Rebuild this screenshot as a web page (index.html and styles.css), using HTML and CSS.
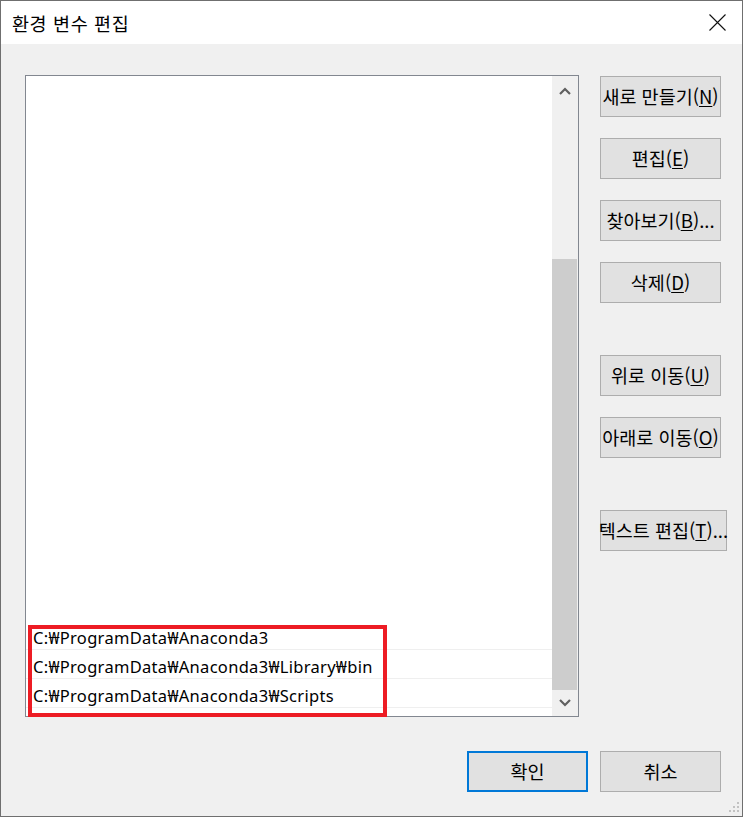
FILE: index.html
```html
<!DOCTYPE html>
<html lang="ko">
<head>
<meta charset="utf-8">
<title>환경 변수 편집</title>
<link rel="stylesheet" href="styles.css">
</head>
<body>
<div class="window">
  <div class="titlebar">
    <span class="title">환경 변수 편집</span>
    <svg class="close" width="17" height="17" viewBox="0 0 17 17"><path d="M0.5 0.5 L16.5 16.5 M16.5 0.5 L0.5 16.5" stroke="#111" stroke-width="1.1" fill="none"/></svg>
  </div>
  <div class="client">
    <div class="main">
      <div class="listbox">
        <div class="list">
          <div class="row">C:₩ProgramData₩Anaconda3</div>
          <div class="row">C:₩ProgramData₩Anaconda3₩Library₩bin</div>
          <div class="row">C:₩ProgramData₩Anaconda3₩Scripts</div>
        </div>
        <div class="scrollbar">
          <div class="sb-btn sb-up"><svg width="12" height="8" viewBox="0 0 12 8"><polyline points="1,7 6,2 11,7" fill="none" stroke="#606060" stroke-width="2.2"/></svg></div>
          <div class="sb-track"><div class="sb-thumb"></div></div>
          <div class="sb-btn sb-down"><svg width="12" height="8" viewBox="0 0 12 8"><polyline points="1,1 6,6 11,1" fill="none" stroke="#606060" stroke-width="2.2"/></svg></div>
        </div>
        <div class="highlight"></div>
      </div>
      <div class="side">
        <div class="btn">새로 만들기(<u>N</u>)</div>
        <div class="btn gap">편집(<u>E</u>)</div>
        <div class="btn gap">찾아보기(<u>B</u>)...</div>
        <div class="btn gap">삭제(<u>D</u>)</div>
        <div class="btn gap-lg">위로 이동(<u>U</u>)</div>
        <div class="btn gap">아래로 이동(<u>O</u>)</div>
        <div class="btn gap-lg wide">텍스트 편집(<u>T</u>)...</div>
      </div>
    </div>
    <div class="footer">
      <div class="btn default">확인</div>
      <div class="btn">취소</div>
    </div>
    <svg class="grip" width="10" height="10" viewBox="0 0 10 10">
      <rect x="8" y="0" width="2" height="2" fill="#c2c2c2"/>
      <rect x="4" y="4" width="2" height="2" fill="#c2c2c2"/>
      <rect x="8" y="4" width="2" height="2" fill="#c2c2c2"/>
      <rect x="0" y="8" width="2" height="2" fill="#c2c2c2"/>
      <rect x="4" y="8" width="2" height="2" fill="#c2c2c2"/>
      <rect x="8" y="8" width="2" height="2" fill="#c2c2c2"/>
    </svg>
  </div>
</div>
</body>
</html>
```
FILE: styles.css
```css
html, body {
  margin: 0;
  padding: 0;
}
body {
  width: 743px;
  height: 817px;
  font-family: "Noto Sans CJK KR", sans-serif;
  color: #000;
}
.window {
  box-sizing: border-box;
  width: 743px;
  height: 817px;
  border: 1px solid #6f6f6f;
  display: flex;
  flex-direction: column;
  background: #f0f0f0;
}
.titlebar {
  height: 43px;
  background: #fff;
  display: flex;
  align-items: center;
  justify-content: space-between;
  padding: 0 16px 0 11px;
  flex: none;
}
.title {
  font-size: 18.5px;
  letter-spacing: 0.6px;
  line-height: 1;
  margin-top: 1px;
}
.close {
  display: block;
}
.client {
  flex: 1;
  display: flex;
  flex-direction: column;
  position: relative;
}
.main {
  display: flex;
  padding: 31px 0 0 24px;
}
.listbox {
  box-sizing: border-box;
  width: 554px;
  height: 642px;
  border: 1px solid #828790;
  background: #fff;
  display: flex;
  position: relative;
}
.list {
  flex: 1;
  display: flex;
  flex-direction: column;
  justify-content: flex-end;
  padding-bottom: 8px;
}
.row {
  box-sizing: border-box;
  height: 29px;
  border-bottom: 1px solid #efefef;
  padding: 6px 0 0 7px;
  font-family: "Noto Sans", "Noto Sans CJK KR", sans-serif;
  font-size: 16.5px;
  letter-spacing: 0.3px;
  line-height: 21px;
  white-space: nowrap;
}
.scrollbar {
  width: 26px;
  background: #f0f0f0;
  display: flex;
  flex-direction: column;
}
.sb-btn {
  height: 26px;
  display: flex;
  align-items: center;
  justify-content: center;
  flex: none;
}
.sb-up svg {
  margin-top: 4px;
}
.sb-track {
  flex: 1;
  display: flex;
  flex-direction: column;
  padding-top: 157px;
}
.sb-thumb {
  flex: 1;
  background: #cdcdcd;
  margin-right: 1px;
}
.highlight {
  position: absolute;
  left: 2px;
  top: 549px;
  width: 359px;
  height: 92px;
  box-sizing: border-box;
  border: 4px solid #ed1c24;
}
.side {
  display: flex;
  flex-direction: column;
  align-items: flex-start;
  margin-left: 21px;
  padding-top: 1px;
}
.btn {
  box-sizing: border-box;
  width: 121px;
  height: 41px;
  border: 1px solid #adadad;
  background: #e1e1e1;
  display: flex;
  align-items: center;
  justify-content: center;
  font-size: 18.5px;
  white-space: nowrap;
  line-height: 1;
}
.btn u {
  text-decoration-thickness: 1px;
  text-underline-offset: 2px;
}
.btn.gap {
  margin-top: 21px;
}
.btn.gap-lg {
  margin-top: 52px;
}
.btn.wide {
  width: 127px;
}
.footer {
  display: flex;
  justify-content: flex-end;
  gap: 12px;
  margin-top: 34px;
  padding-right: 21px;
}
.btn.default {
  border: 2px solid #0078d7;
}
.grip {
  position: absolute;
  right: 3px;
  bottom: 4px;
}
```
